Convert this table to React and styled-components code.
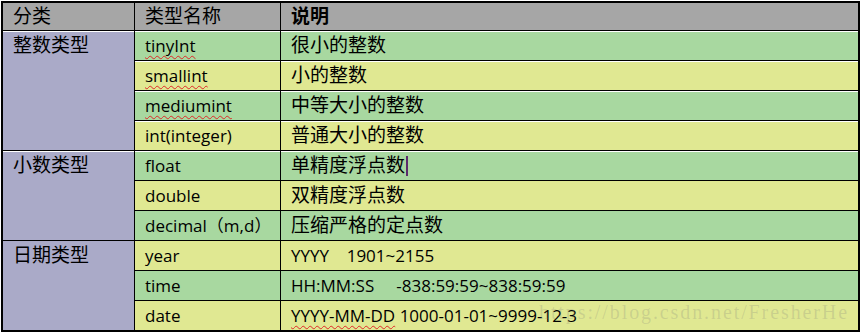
import React from "react";
import styled, { createGlobalStyle } from "styled-components";

const Global = createGlobalStyle`
  html, body { margin: 0; padding: 0; background: #fff; }
  body { font-family: "Open Sans", "Noto Sans CJK SC", sans-serif; }
`;

const COLORS = {
  header: "#a6a6a6",
  group: "#aaaac8",
  green: "#a8d8a0",
  yellow: "#e0e892",
};

const Wrap = styled.div`
  position: relative;
  margin: 1px 0 0 1px;
  width: 859px;
`;

const Table = styled.div`
  box-sizing: border-box;
  width: 100%;
  display: grid;
  grid-template-columns: 131px 145px 1fr;
  grid-template-rows: 27px repeat(10, 29px);
  gap: 1px;
  background: #000;
  border: 2px solid #000;
`;

const Cell = styled.div`
  background: ${(p) => p.$bg};
  padding: 0 10px;
  line-height: ${(p) => (p.$header ? "27px" : "29px")};
  font-family: "Open Sans", "Noto Sans CJK SC", sans-serif;
  font-size: ${(p) => (p.$cjk ? "19px" : "17px")};
  font-weight: ${(p) => (p.$bold ? 700 : 400)};
  color: #000;
  white-space: pre;
  overflow: hidden;
  box-shadow: ${(p) => (p.$lit ? "inset 0 1px 0 #fff" : "none")};
`;

const GroupCell = styled(Cell)`
  grid-column: 1;
  grid-row: span ${(p) => p.$span};
`;

const Squiggle = styled.span`
  text-decoration: underline wavy #e02828;
  text-decoration-thickness: 1px;
  text-underline-offset: 3px;
  text-decoration-skip-ink: none;
`;

const Caret = styled.span`
  display: inline-block;
  width: 2px;
  height: 20px;
  margin-left: 1px;
  background: #5c2c6c;
  vertical-align: -4px;
`;

const Watermark = styled.div`
  position: absolute;
  right: 11px;
  bottom: 10px;
  font-family: "Liberation Serif", "DejaVu Serif", serif;
  font-size: 20px;
  line-height: 20px;
  letter-spacing: 1.9px;
  color: rgba(120, 120, 120, 0.22);
  pointer-events: none;
  white-space: nowrap;
`;

const groups = [
  {
    label: "整数类型",
    rows: [
      { name: "tinyInt", desc: "很小的整数", cjk: true, typo: true },
      { name: "smallint", desc: "小的整数", cjk: true, typo: true },
      { name: "mediumint", desc: "中等大小的整数", cjk: true, typo: true },
      { name: "int(integer)", desc: "普通大小的整数", cjk: true },
    ],
  },
  {
    label: "小数类型",
    rows: [
      { name: "float", desc: "单精度浮点数", cjk: true, caret: true },
      { name: "double", desc: "双精度浮点数", cjk: true },
      { name: "decimal（m,d）", desc: "压缩严格的定点数", cjk: true },
    ],
  },
  {
    label: "日期类型",
    rows: [
      { name: "year", desc: "YYYY    1901~2155" },
      { name: "time", desc: "HH:MM:SS     -838:59:59~838:59:59" },
      { name: "date", desc: "YYYY-MM-DD 1000-01-01~9999-12-3", descTypo: "YYYY-MM-DD" },
    ],
  },
];

export default function App() {
  let index = 0;
  const cells = [];
  groups.forEach((g, gi) => {
    const firstIndex = index;
    cells.push(
      <GroupCell key={`g${gi}`} $bg={COLORS.group} $span={g.rows.length} $cjk $lit={firstIndex < 5}>
        {g.label}
      </GroupCell>
    );
    g.rows.forEach((r, ri) => {
      const bg = index % 2 === 0 ? COLORS.green : COLORS.yellow;
      const lit = index < 5;
      let desc = r.desc;
      if (r.descTypo) {
        desc = (
          <>
            <Squiggle>{r.descTypo}</Squiggle>
            {r.desc.slice(r.descTypo.length)}
          </>
        );
      }
      cells.push(
        <Cell key={`n${gi}-${ri}`} $bg={bg} $lit={lit}>
          {r.typo ? <Squiggle>{r.name}</Squiggle> : r.name}
        </Cell>,
        <Cell key={`d${gi}-${ri}`} $bg={bg} $lit={lit} $cjk={r.cjk}>
          {desc}
          {r.caret && <Caret />}
        </Cell>
      );
      index += 1;
    });
  });

  return (
    <>
      <Global />
      <Wrap>
        <Table>
          <Cell $bg={COLORS.header} $header $cjk>分类</Cell>
          <Cell $bg={COLORS.header} $header $cjk>类型名称</Cell>
          <Cell $bg={COLORS.header} $header $cjk $bold>说明</Cell>
          {cells}
        </Table>
        <Watermark>https://blog.csdn.net/FresherHe</Watermark>
      </Wrap>
    </>
  );
}
